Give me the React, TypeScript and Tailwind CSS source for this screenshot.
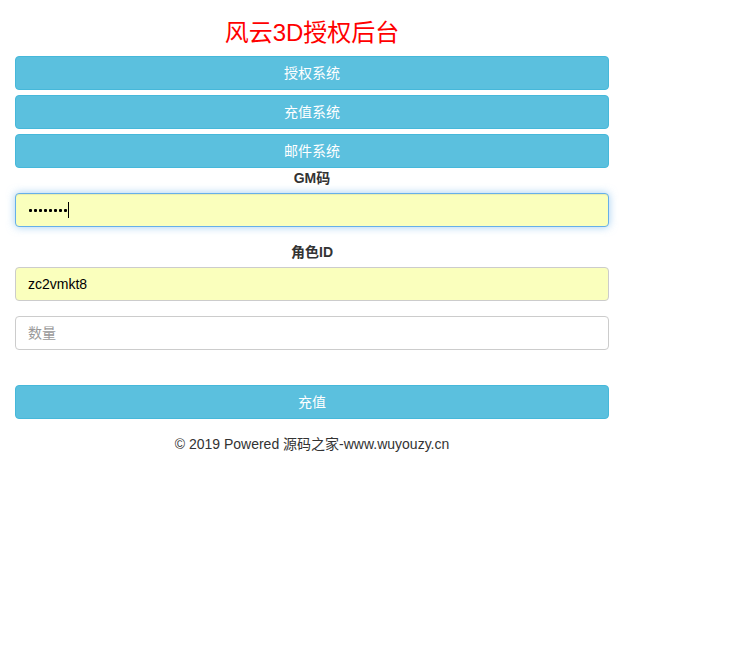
import React from "react";

const font = { fontFamily: '"Liberation Sans", Arial, "Noto Sans CJK SC", sans-serif' };

function Btn({ children }: { children: React.ReactNode }) {
  return (
    <button className="block w-full h-[34px] rounded-[4px] border border-[#46b8da] bg-[#5bc0de] text-white text-[14px] leading-[20px]">
      {children}
    </button>
  );
}

export default function App() {
  const dots = [0, 1, 2, 3, 4, 5, 6, 7];
  return (
    <div className="bg-white min-h-[672px] w-[756px] text-[#333] text-[14px]" style={font}>
      <div className="w-[594px] ml-[15px] pt-[20px]">
        <h1 className="text-center text-[24px] leading-[26px] text-[#ff0000] font-normal mb-[10px]">风云3D授权后台</h1>
        <div className="flex flex-col gap-[5px]">
          <Btn>授权系统</Btn>
          <Btn>充值系统</Btn>
          <Btn>邮件系统</Btn>
        </div>
        <div className="mb-[15px]">
          <div className="text-center font-bold leading-[20px] mb-[5px]">GM码</div>
          <div className="h-[34px] rounded-[4px] border border-[#66afe9] bg-[#faffbd] shadow-[inset_0_1px_1px_rgba(0,0,0,.075),0_0_8px_rgba(102,175,233,.6)] flex items-center pl-[13px]">
            <div className="flex items-center gap-[2px]">
              {dots.map((d) => (
                <span key={d} className="w-[3px] h-[3px] rounded-[1px] bg-black" />
              ))}
            </div>
            <span className="w-px h-[16px] bg-black ml-[1px]" />
          </div>
        </div>
        <div className="mb-[15px]">
          <div className="text-center font-bold leading-[20px] mb-[5px]">角色ID</div>
          <div className="h-[34px] rounded-[4px] border border-[#ccc] bg-[#faffbd] flex items-center pl-[12px] text-black text-[14px]">
            zc2vmkt8
          </div>
        </div>
        <div className="mb-[35px]">
          <div className="h-[34px] rounded-[4px] border border-[#ccc] bg-white flex items-center pl-[12px] text-[#999] text-[14px]">
            数量
          </div>
        </div>
        <Btn>充值</Btn>
        <div className="text-center leading-[20px] mt-[15px]">© 2019 Powered 源码之家-www.wuyouzy.cn</div>
      </div>
    </div>
  );
}
